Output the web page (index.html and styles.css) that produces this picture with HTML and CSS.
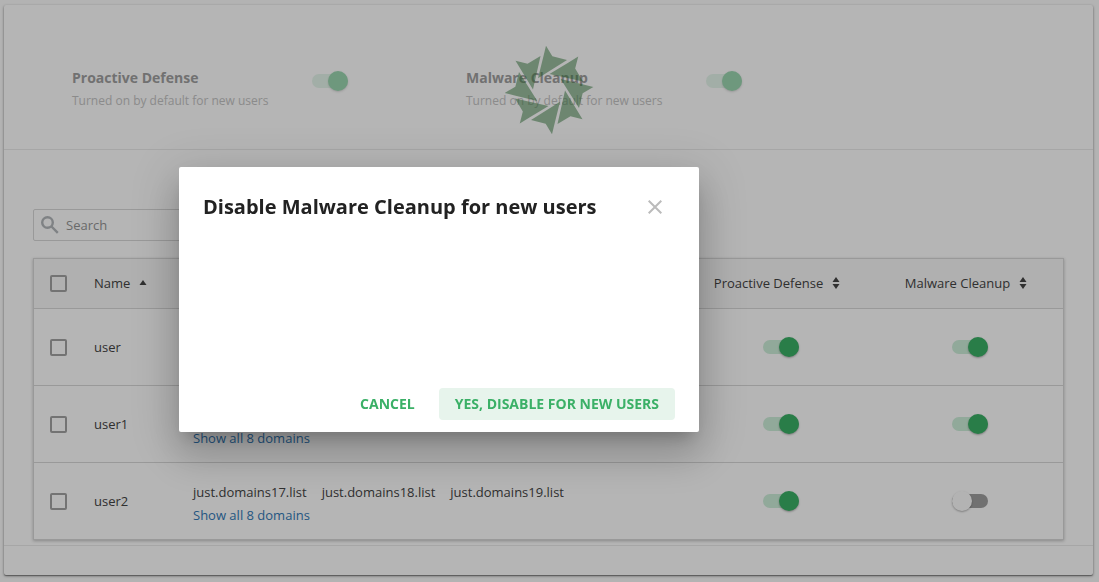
FILE: index.html
```html
<!DOCTYPE html>
<html lang="en">
<head>
<meta charset="utf-8">
<title>Users</title>
<link rel="stylesheet" href="styles.css">
</head>
<body>
<svg class="defs" aria-hidden="true">
  <symbol id="sort" viewBox="0 0 8 14"><path d="M4 1L7.5 6H.5zM4 13L7.5 8H.5z"/></symbol>
</svg>
<main class="panel">
  <section class="features">
    <div class="feature">
      <label class="feature-text" for="pd-default"><strong class="feature-name">Proactive Defense</strong><span class="feature-note">Turned on by default for new users</span></label>
      <input class="toggle" type="checkbox" id="pd-default" checked>
    </div>
    <div class="feature">
      <label class="feature-text" for="mc-default"><strong class="feature-name">Malware Cleanup</strong><span class="feature-note">Turned on by default for new users</span></label>
      <input class="toggle" type="checkbox" id="mc-default" checked>
    </div>
    <svg class="loader" viewBox="-135 -135 270 270" aria-hidden="true">
      <path d="M-9-133L10-101 54-90-33-35-17-100z"/>
      <path transform="rotate(45)" d="M-9-133L10-101 54-90-33-35-17-100z"/>
      <path transform="rotate(90)" d="M-9-133L10-101 54-90-33-35-17-100z"/>
      <path transform="rotate(135)" d="M-9-133L10-101 54-90-33-35-17-100z"/>
      <path transform="rotate(180)" d="M-9-133L10-101 54-90-33-35-17-100z"/>
      <path transform="rotate(225)" d="M-9-133L10-101 54-90-33-35-17-100z"/>
      <path transform="rotate(270)" d="M-9-133L10-101 54-90-33-35-17-100z"/>
      <path transform="rotate(315)" d="M-9-133L10-101 54-90-33-35-17-100z"/>
    </svg>
  </section>
  <section class="users">
    <div class="search">
      <svg class="search-icon" viewBox="0 0 18 18" aria-hidden="true"><circle cx="6.5" cy="6.5" r="5.3"/><path d="M10.5 10.500L16.8 16.800"/></svg>
      <input class="search-input" type="text" placeholder="Search" aria-label="Search">
    </div>
    <table class="table">
      <thead>
        <tr>
          <th class="col-check"><input class="check" type="checkbox" aria-label="Select all"></th>
          <th class="col-name">Name<svg class="sort-up" viewBox="0 0 8 6" aria-hidden="true"><path d="M4 0L7.5 5H.5z"/></svg></th>
          <th></th>
          <th class="col-switch">Proactive Defense<svg class="sort" aria-hidden="true"><use href="#sort"/></svg></th>
          <th class="col-switch">Malware Cleanup<svg class="sort" aria-hidden="true"><use href="#sort"/></svg></th>
        </tr>
      </thead>
      <tbody>
        <tr>
          <td><input class="check" type="checkbox" aria-label="Select user"></td>
          <td>user</td>
          <td></td>
          <td class="col-switch"><input class="toggle" type="checkbox" aria-label="Proactive Defense for user" checked></td>
          <td class="col-switch"><input class="toggle" type="checkbox" aria-label="Malware Cleanup for user" checked></td>
        </tr>
        <tr>
          <td><input class="check" type="checkbox" aria-label="Select user1"></td>
          <td>user1</td>
          <td><div class="domains"><a class="link" href="#">Show all 8 domains</a></div></td>
          <td class="col-switch"><input class="toggle" type="checkbox" aria-label="Proactive Defense for user1" checked></td>
          <td class="col-switch"><input class="toggle" type="checkbox" aria-label="Malware Cleanup for user1" checked></td>
        </tr>
        <tr>
          <td><input class="check" type="checkbox" aria-label="Select user2"></td>
          <td>user2</td>
          <td><div class="domains"><div class="domain-list"><span>just.domains17.list</span><span>just.domains18.list</span><span>just.domains19.list</span></div><a class="link" href="#">Show all 8 domains</a></div></td>
          <td class="col-switch"><input class="toggle" type="checkbox" aria-label="Proactive Defense for user2" checked></td>
          <td class="col-switch"><input class="toggle" type="checkbox" aria-label="Malware Cleanup for user2"></td>
        </tr>
      </tbody>
    </table>
  </section>
  <footer class="panel-foot"></footer>
</main>
<div class="backdrop"></div>
<div class="dialog" role="dialog" aria-modal="true" aria-labelledby="dialog-title">
  <header class="dialog-head">
    <h2 class="dialog-title" id="dialog-title">Disable Malware Cleanup for new users</h2>
    <button class="close" type="button" aria-label="Close"><svg class="close-icon" viewBox="0 0 14 14"><path d="M.7.7L13.3 13.300M13.3.7L.7 13.300"/></svg></button>
  </header>
  <footer class="actions">
    <button class="btn" type="button">CANCEL</button>
    <button class="btn btn-tinted" type="button">YES, DISABLE FOR NEW USERS</button>
  </footer>
</div>
</body>
</html>
```
FILE: styles.css
```css
* { box-sizing: border-box; }

body {
  margin: 0;
  padding: 5px 6px 7px 4px;
  background: #fcfcfc;
  color: #444;
  font: 13px/23px "Open Sans", sans-serif;
}

.defs { position: absolute; width: 0; height: 0; }

.panel {
  background: #fff;
  border-radius: 2px;
  box-shadow: 0 1px 3px rgba(0, 0, 0, .4), 0 1px 1px rgba(0, 0, 0, .3);
}

.features {
  position: relative;
  display: flex;
  padding: 61px 68px 37px;
  border-bottom: 1px solid #eaeaea;
}

.feature {
  display: flex;
  align-items: flex-start;
  width: 394px;
}

.feature-text {
  display: flex;
  flex-direction: column;
  width: 240px;
}

.feature-name { font-size: 14px; font-weight: 700; color: #a0a0a0; }
.feature-note { font-size: 12px; color: #c4c4c4; }
.feature .toggle { margin-top: 8px; opacity: .5; }

.loader {
  position: absolute;
  left: 500px;
  top: 40px;
  width: 90px;
  height: 90px;
  fill: #377d3f;
  opacity: .5;
}

.toggle {
  appearance: none;
  display: block;
  width: 36px;
  height: 14px;
  margin: 0 auto;
  border-radius: 7px;
  background: #a0a0a0;
}

.feature .toggle { margin-left: 0; }

.toggle::before {
  content: "";
  display: block;
  width: 20px;
  height: 20px;
  margin-top: -3px;
  border-radius: 50%;
  background: #fdfdfd;
  box-shadow: 0 1px 2px rgba(0, 0, 0, .3);
}

.toggle:checked { background: #cdeed9; }
.toggle:checked::before { margin-left: 16px; background: #3ab066; }

.users { padding: 59px 29px 5px; }

.search {
  display: flex;
  align-items: center;
  width: 320px;
  height: 32px;
  padding: 0 7px;
  border: 1px solid #d8d8d8;
  border-radius: 2px;
}

.search-icon {
  width: 18px;
  height: 18px;
  fill: none;
  stroke: #b3b7bb;
  stroke-width: 2.4;
}

.search-input {
  flex: 1;
  min-width: 0;
  margin-left: 7px;
  padding: 0;
  border: 0;
  outline: 0;
  background: none;
  color: #444;
  font: inherit;
}

.search-input::placeholder { color: #959595; opacity: 1; }

.table {
  width: 100%;
  margin-top: 17px;
  border: 1px solid #d8d8d8;
  border-collapse: separate;
  border-spacing: 0;
  table-layout: fixed;
  box-shadow: 0 1px 3px rgba(0, 0, 0, .25);
}

th, td { padding: 0; text-align: left; font-weight: 400; }
th { height: 49px; background: #f8f8f8; }
td { height: 77px; border-top: 1px solid #d8d8d8; }
th:first-child, td:first-child { padding-left: 16px; }
.col-check { width: 60px; }
.col-name { width: 99px; }
th.col-switch, td.col-switch { width: 189px; padding-left: 2px; text-align: center; }

.check {
  appearance: none;
  display: block;
  width: 17px;
  height: 17px;
  margin: 0;
  border: 2px solid #a2a2a2;
  border-radius: 2px;
}

.sort-up { width: 8px; height: 6px; margin-left: 9px; vertical-align: 2px; fill: #444; }
.sort { width: 8px; height: 14px; margin: 0 7px 0 9px; vertical-align: -2px; fill: #444; }

.domains {
  display: flex;
  flex-direction: column;
  align-items: flex-start;
  justify-content: flex-end;
  height: 51px;
}

.domain-list { display: flex; gap: 15px; }
.link { color: #337ab7; text-decoration: none; }

.panel-foot { height: 30px; border-top: 1px solid #eaeaea; }

.backdrop { position: fixed; inset: 0; background: rgba(0, 0, 0, .29); }

.dialog {
  position: absolute;
  left: 179px;
  top: 167px;
  display: flex;
  flex-direction: column;
  justify-content: space-between;
  width: 520px;
  min-height: 265px;
  padding: 24px 24px 12px;
  border-radius: 2px;
  background: #fff;
  box-shadow: 0 11px 15px -7px rgba(0, 0, 0, .2), 0 24px 38px 3px rgba(0, 0, 0, .14), 0 9px 46px 8px rgba(0, 0, 0, .12);
}

.dialog-head { display: flex; align-items: center; justify-content: space-between; }
.dialog-title { margin: 0; color: #222; font-size: 20px; line-height: 32px; font-weight: 700; }

.close { display: flex; padding: 9px; margin-right: 4px; border: 0; background: none; }
.close-icon { width: 14px; height: 14px; fill: none; stroke: #bbb; stroke-width: 2; }

.actions { display: flex; justify-content: flex-end; gap: 8px; }

.btn {
  height: 32px;
  padding: 0 16px;
  border: 0;
  border-radius: 4px;
  background: none;
  color: #3bb067;
  font: 700 14px/32px "Open Sans", sans-serif;
}

.btn-tinted { background: #e7f4ec; }
```
